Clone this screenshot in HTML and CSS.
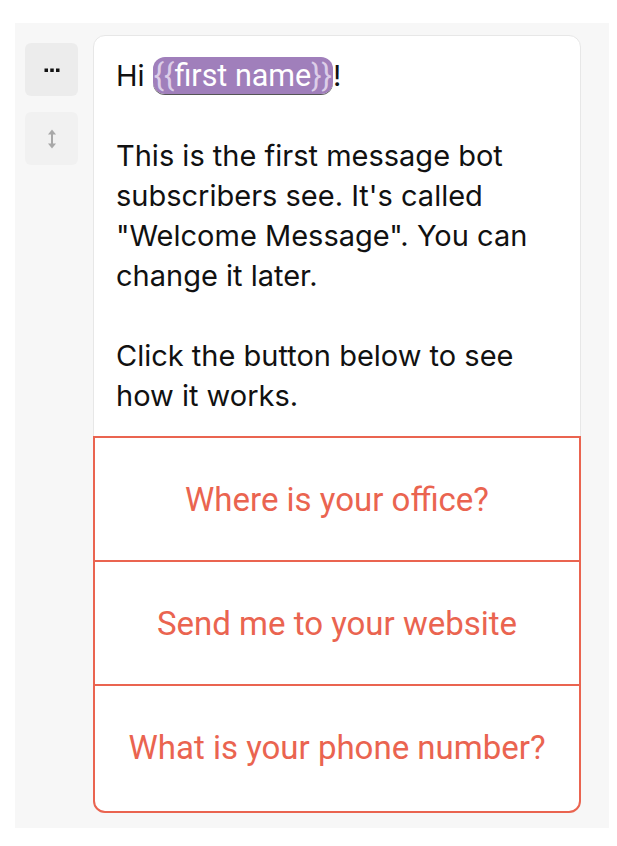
FILE: index.html
```html
<!DOCTYPE html>
<html lang="en">
<head>
<meta charset="utf-8">
<title>Welcome Message</title>
<link rel="stylesheet" href="styles.css">
</head>
<body>
<div class="panel">
  <div class="tools">
    <button class="tool tool-more" aria-label="More">
      <svg width="20" height="6" viewBox="0 0 20 6"><rect x="2.5" y="1.5" width="3.5" height="3.5" fill="#111"/><rect x="8.25" y="1.5" width="3.5" height="3.5" fill="#111"/><rect x="14" y="1.5" width="3.5" height="3.5" fill="#111"/></svg>
    </button>
    <button class="tool tool-move" aria-label="Move">
      <svg width="12" height="26" viewBox="0 0 12 26"><path d="M6 5V21" stroke="#a8a8a8" stroke-width="2"/><path d="M2 8.5L6 3.5L10 8.5Z" fill="#a8a8a8"/><path d="M2 17.5L6 22.5L10 17.5Z" fill="#a8a8a8"/></svg>
    </button>
  </div>
  <div class="card">
    <div class="message">
      <p>Hi <span class="chip"><span class="brace">{{</span>first name<span class="brace">}}</span></span>!</p>
      <p>This is the first message bot<br>subscribers see. It's called<br>"Welcome Message". You can<br>change it later.</p>
      <p>Click the button below to see<br>how it works.</p>
    </div>
    <div class="actions">
      <div class="action">Where is your office?</div>
      <div class="action">Send me to your website</div>
      <div class="action">What is your phone number?</div>
    </div>
  </div>
</div>
</body>
</html>
```
FILE: styles.css
```css
html, body {
  margin: 0;
  padding: 0;
  background: #ffffff;
}
body {
  padding: 23px 8px 0 15px;
}
.panel {
  width: 594px;
  height: 805px;
  box-sizing: border-box;
  background: #f7f7f7;
  display: flex;
  align-items: flex-start;
  padding: 12px 28px 17px 10px;
  gap: 15px;
}
.tools {
  display: flex;
  flex-direction: column;
  gap: 16px;
  margin-top: 8px;
}
.tool {
  width: 53px;
  height: 53px;
  border: none;
  border-radius: 6px;
  padding: 0;
  display: flex;
  align-items: center;
  justify-content: center;
}
.tool-more {
  background: #ececec;
}
.tool-move {
  background: #f1f1f1;
}
.card {
  width: 488px;
  background: #ffffff;
  border-radius: 12px;
  box-sizing: border-box;
  border: 1px solid #e7e7e7;
  display: flex;
  flex-direction: column;
}
.message {
  padding: 20px 16px 20px 22px;
  font-family: "Inter", "Liberation Sans", sans-serif;
  font-size: 29px;
  line-height: 40px;
  color: #111111;
}
.message p {
  margin: 0 0 40px 0;
}
.message p:last-child {
  margin-bottom: 0;
}
.chip {
  background: #a07fbb;
  color: #ffffff;
  border-radius: 12px;
  padding: 1px 1px 1px 1px;
  font-family: "Roboto", sans-serif;
  font-size: 30.5px;
  box-shadow: 0 1px 0 #555;
}
.brace {
  color: #dccde8;
}
.actions {
  display: flex;
  flex-direction: column;
  margin: 0 -1px -1px -1px;
}
.action {
  height: 126px;
  box-sizing: border-box;
  border: 2px solid #ea6450;
  margin-top: -2px;
  display: flex;
  align-items: center;
  justify-content: center;
  font-family: "Roboto", sans-serif;
  font-size: 33px;
  color: #ea6450;
}
.action:first-child {
  margin-top: 0;
}
.action:last-child {
  height: 129px;
  padding-bottom: 2px;
  border-radius: 0 0 12px 12px;
}
```
